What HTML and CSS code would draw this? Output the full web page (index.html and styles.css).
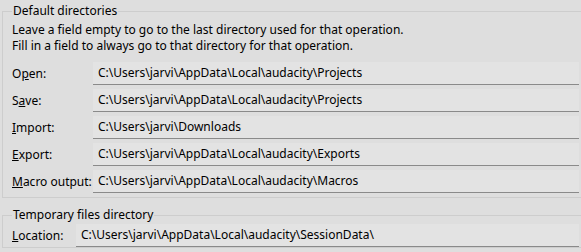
FILE: index.html
```html
<!DOCTYPE html>
<html lang="en">
<head>
    <meta charset="UTF-8">
    <title>Directories</title>
    <link rel="stylesheet" href="styles.css">
</head>
<body>
    <fieldset class="group group-main">
        <legend>Default directories</legend>
        <p class="hint">Leave a field empty to go to the last directory used for that operation.</p>
        <p class="hint">Fill in a field to always go to that directory for that operation.</p>
        <div class="rows">
            <label class="row"><span class="label">O<u>p</u>en:</span><span class="field">C:\Users\jarvi\AppData\Local\audacity\Projects</span></label>
            <label class="row"><span class="label">S<u>a</u>ve:</span><span class="field">C:\Users\jarvi\AppData\Local\audacity\Projects</span></label>
            <label class="row"><span class="label"><u>I</u>mport:</span><span class="field">C:\Users\jarvi\Downloads</span></label>
            <label class="row"><span class="label"><u>E</u>xport:</span><span class="field">C:\Users\jarvi\AppData\Local\audacity\Exports</span></label>
            <label class="row"><span class="label"><u>M</u>acro output:</span><span class="field">C:\Users\jarvi\AppData\Local\audacity\Macros</span></label>
        </div>
    </fieldset>
    <fieldset class="group group-temp">
        <legend>Temporary files directory</legend>
        <label class="row row-temp"><span class="label"><u>L</u>ocation:</span><span class="field">C:\Users\jarvi\AppData\Local\audacity\SessionData\</span></label>
    </fieldset>
</body>
</html>
```

FILE: styles.css
```css
body {
    background-color: #dedede;
    margin: 0;
    padding: 3px 0 0 2px;
    font-family: "Noto Sans", "Open Sans", sans-serif;
    font-size: 12px;
    color: #000;
    overflow: hidden;
    width: 600px;
}
.group {
    border: 1px solid #cdcdcd;
    border-right: none;
    margin: 0;
    padding: 0 0 0 9px;
}
.group legend {
    padding: 0 1px;
    margin-left: 0;
    line-height: 16px;
}
.hint {
    margin: 0;
    line-height: 16px;
}
.group-main .hint:first-of-type {
    margin-top: 3px;
}
.rows {
    display: flex;
    flex-direction: column;
    gap: 4px;
    margin-top: 8px;
    padding-bottom: 4px;
}
.row {
    display: flex;
    align-items: center;
    width: 567px;
}
.label {
    width: 81px;
    flex: none;
}
.field {
    flex: 1;
    height: 22px;
    line-height: 22px;
    background-color: #e3e3e3;
    border-bottom: 1px solid #8a8a8a;
    padding-left: 5px;
    white-space: nowrap;
}
.group-temp {
    margin-top: 9px;
    padding-bottom: 0;
}
.group-temp .label {
    width: 64px;
}
.row-temp {
    margin-top: 1px;
}
```
